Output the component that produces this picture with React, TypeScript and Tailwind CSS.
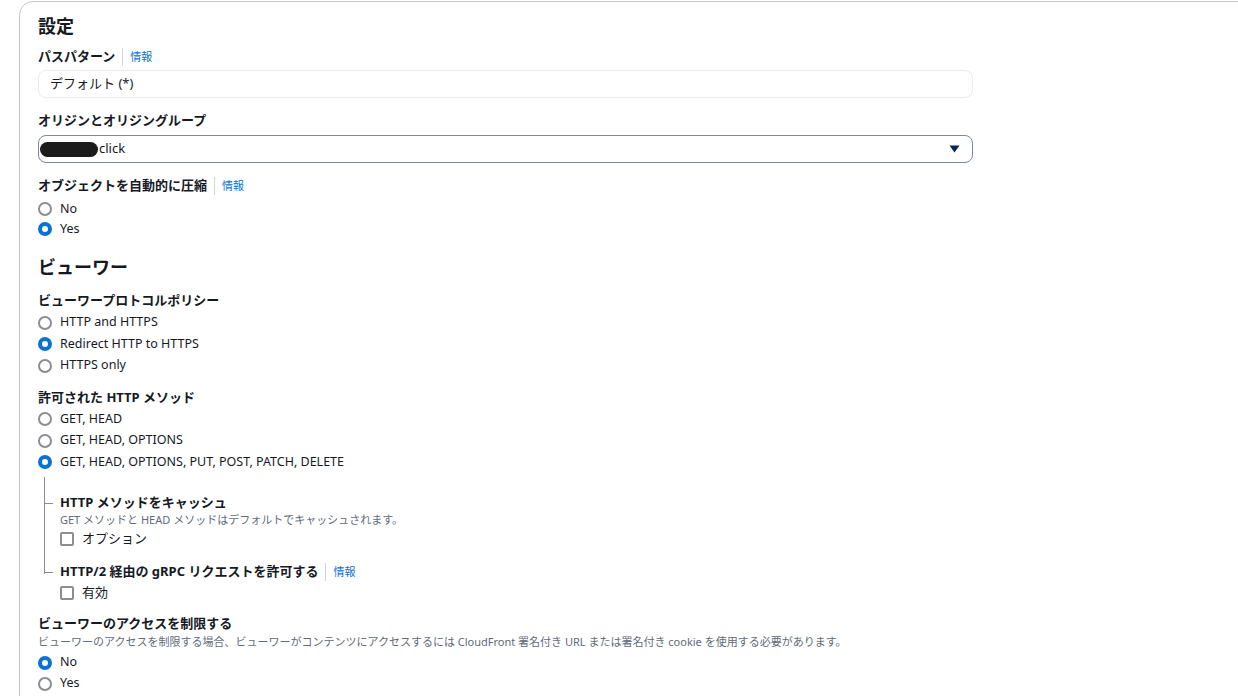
import React from "react";

const FONT = { fontFamily: '"Noto Sans", "Noto Sans CJK JP", sans-serif' };

function Info() {
  return (
    <span className="flex items-center">
      <span className="mx-[7px] h-[18px] w-px bg-[#d1d5db]" />
      <span className="text-[11px] font-normal text-[#0972d3]">情報</span>
    </span>
  );
}

function Label({ children, info = false, h = "h-[20px]" }: { children: React.ReactNode; info?: boolean; h?: string }) {
  return (
    <div className={`flex ${h} items-center text-[13px] font-bold text-[#16191f]`}>
      <span>{children}</span>
      {info && <Info />}
    </div>
  );
}

function Radio({ checked = false, children, h = "h-[21.5px]" }: { checked?: boolean; children: React.ReactNode; h?: string }) {
  return (
    <div className={`flex ${h} items-center`}>
      {checked ? (
        <span className="box-border h-[14px] w-[14px] rounded-full border-[4px] border-[#0972d3] bg-white" />
      ) : (
        <span className="box-border h-[14px] w-[14px] rounded-full border-[2px] border-[#8c8c94] bg-white" />
      )}
      <span className="ml-[8px] text-[12.5px] text-[#16191f]">{children}</span>
    </div>
  );
}

function Checkbox({ children }: { children: React.ReactNode }) {
  return (
    <div className="flex h-[20px] items-center">
      <span className="box-border h-[14px] w-[14px] rounded-[2px] border-[2px] border-[#8c8c94] bg-white" />
      <span className="ml-[8px] text-[13px] text-[#16191f]">{children}</span>
    </div>
  );
}

export default function App() {
  return (
    <div className="h-[696px] w-full overflow-hidden bg-white" style={FONT}>
      <div className="ml-[19px] mr-[-40px] mt-[1px] rounded-tl-[14px] rounded-tr-[14px] border border-[#c6c6cd] bg-white pl-[18px] pt-[10px] pb-[40px]">
        <div className="w-[935px]">
          <div className="flex h-[28px] items-center text-[18px] font-bold text-[#16191f]">設定</div>

          <div className="mt-[7px]">
            <Label info>パスパターン</Label>
          </div>
          <div className="mt-[3px] flex h-[28px] items-center rounded-[8px] border border-[#e9ebed] bg-white pl-[11px] text-[13px] text-[#16191f]">
            デフォルト (*)
          </div>

          <div className="mt-[13px]">
            <Label>オリジンとオリジングループ</Label>
          </div>
          <div className="mt-[4px] flex h-[28px] items-center justify-between rounded-[8px] border border-[#7d8998] bg-white pl-[1px] pr-[12px]">
            <div className="flex items-center">
              <span className="h-[15px] w-[58px] rounded-full bg-[#1b1b1b]" />
              <span className="ml-[1px] text-[13px] text-[#16191f]">click</span>
            </div>
            <svg width="11" height="8" viewBox="0 0 11 8">
              <path d="M0.5 0.5 L10.5 0.5 L5.5 7.5 Z" fill="#0b2552" />
            </svg>
          </div>

          <div className="mt-[13px]">
            <Label info>オブジェクトを自動的に圧縮</Label>
          </div>
          <div className="mt-[3px]">
            <Radio h="h-[20px]">No</Radio>
            <Radio h="h-[20px]" checked>Yes</Radio>
          </div>

          <div className="mt-[14px] flex h-[28px] items-center text-[18px] font-bold text-[#16191f]">ビューワー</div>

          <div className="mt-[10px]">
            <Label>ビューワープロトコルポリシー</Label>
          </div>
          <div className="mt-[1px]">
            <Radio>HTTP and HTTPS</Radio>
            <Radio checked>Redirect HTTP to HTTPS</Radio>
            <Radio>HTTPS only</Radio>
          </div>

          <div className="mt-[11px]">
            <Label>許可された HTTP メソッド</Label>
          </div>
          <div className="mt-[1px]">
            <Radio>GET, HEAD</Radio>
            <Radio>GET, HEAD, OPTIONS</Radio>
            <Radio checked>GET, HEAD, OPTIONS, PUT, POST, PATCH, DELETE</Radio>
          </div>

          <div className="relative mt-[6px] pl-[22px] pt-[15px]">
            <span className="absolute left-[6px] top-[-2px] h-[97px] w-px bg-[#8c8c94]" />
            <div className="relative">
              <span className="absolute left-[-16px] top-[9px] h-px w-[9px] bg-[#8c8c94]" />
              <Label h="h-[18px]">HTTP メソッドをキャッシュ</Label>
            </div>
            <div className="flex h-[16px] items-center text-[11px] text-[#5f6b7a]">
              GET メソッドと HEAD メソッドはデフォルトでキャッシュされます。
            </div>
            <div className="mt-[1px]">
              <Checkbox>オプション</Checkbox>
            </div>
            <div className="relative mt-[13px]">
              <span className="absolute left-[-16px] top-[10px] h-px w-[9px] bg-[#8c8c94]" />
              <Label info>HTTP/2 経由の gRPC リクエストを許可する</Label>
            </div>
            <div className="mt-[1px]">
              <Checkbox>有効</Checkbox>
            </div>
          </div>

          <div className="mt-[11px]">
            <Label h="h-[20px]">ビューワーのアクセスを制限する</Label>
          </div>
          <div className="flex h-[16px] items-center whitespace-nowrap text-[11px] text-[#5f6b7a]">
            ビューワーのアクセスを制限する場合、ビューワーがコンテンツにアクセスするには CloudFront 署名付き URL または署名付き cookie を使用する必要があります。
          </div>
          <div className="mt-[2px]">
            <Radio checked>No</Radio>
            <Radio h="h-[20px]">Yes</Radio>
          </div>
        </div>
      </div>
    </div>
  );
}
